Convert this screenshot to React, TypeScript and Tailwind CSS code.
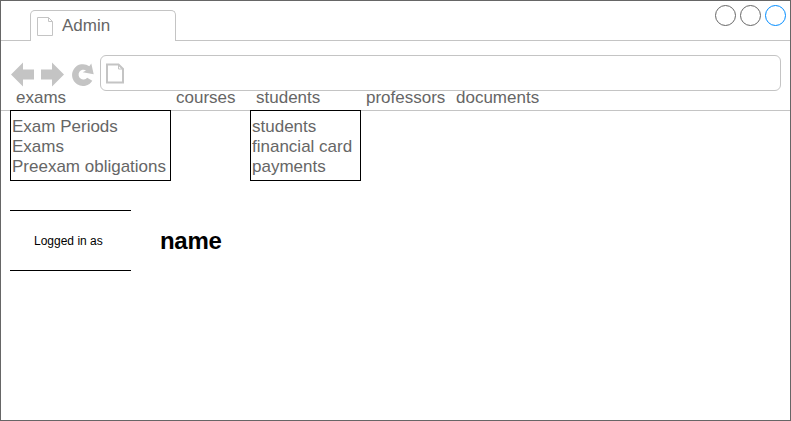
function Tab({ label }: { label: string }) {
  return (
    <div className="mt-[9px] flex w-[146px] rounded-t-[5px] border border-b-0 border-[#c4c4c4] pl-[6px] pt-[5px] text-[#666]">
      <svg width="18" height="21" viewBox="0 0 18 21" fill="none" stroke="#c4c4c4" className="mt-px">
        <path d="M.5.5H11.5L15.5 4.5V18.5H.5ZM11.5.5V4.5H15.5" />
      </svg>
      <span className="ml-[7px] leading-5">{label}</span>
    </div>
  );
}

function WindowButtons() {
  return (
    <svg width="75" height="30" viewBox="0 0 75 30" fill="none" className="ml-auto">
      <circle cx="10.5" cy="14.5" r="10" stroke="#666" />
      <circle cx="35.5" cy="14.5" r="10" stroke="#666" />
      <circle cx="60.5" cy="14.5" r="10" stroke="#008cff" />
    </svg>
  );
}

function NavigationIcons() {
  return (
    <svg width="99" height="36" viewBox="1 55 99 36" fill="#c4c4c4" className="shrink-0">
      <path d="M11 74.5 23 62.5V69.5H34V79.5H23V86.5Z" />
      <path d="M64 74.5 52 62.5V69.5H41V79.5H52V86.5Z" />
      <path d="M91.3 63.5 93.7 74.3 82.7 72.3 86 70.4A4.9 4.9 0 1 0 87.2 77.8L92.3 80.7A10.9 10.9 0 1 1 89.3 66.2Z" />
    </svg>
  );
}

function Menu({ items, width }: { items: string[]; width: string }) {
  return (
    <ul className={`-mt-px h-[71px] border border-black pl-px pt-[6px] leading-5 ${width}`}>
      {items.map((item) => (
        <li key={item} className="whitespace-nowrap">{item}</li>
      ))}
    </ul>
  );
}

export default function App() {
  return (
    <main className="flex h-[421px] w-[791px] flex-col border border-[#666] bg-white font-['Liberation_Sans',Arial,sans-serif] text-[17px] text-[#666]">
      <header className="flex h-10 shrink-0">
        <div className="w-[29px] border-b border-[#c4c4c4]" />
        <Tab label="Admin" />
        <div className="flex flex-1 border-b border-[#c4c4c4]">
          <WindowButtons />
        </div>
      </header>
      <section className="h-[70px] shrink-0 border-b border-[#c4c4c4] pt-[14px]">
        <div className="flex">
          <NavigationIcons />
          <div className="h-9 w-[681px] rounded-[6px] border border-[#c4c4c4]">
            <svg width="26" height="34" viewBox="101 56 26 34" fill="none" stroke="#c4c4c4">
              <path strokeWidth="2" d="M107 64.5H118.5L123 69V82.5H107Z" />
              <path d="M118.5 64V69H123" />
            </svg>
          </div>
        </div>
        <nav className="-mt-[3px] flex pl-[15px] leading-5">
          <span className="w-40">exams</span>
          <span className="w-20">courses</span>
          <span className="w-[110px]">students</span>
          <span className="w-[90px]">professors</span>
          <span>documents</span>
        </nav>
      </section>
      <section className="flex gap-[79px] pl-[9px]">
        <Menu width="w-[161px]" items={["Exam Periods", "Exams", "Preexam obligations"]} />
        <Menu width="w-[111px]" items={["students", "financial card", "payments"]} />
      </section>
      <section className="mt-[29px] flex items-center pl-[9px] text-black">
        <div className="h-[61px] w-[121px] border-y border-black pl-6 pt-[22px] text-xs leading-4">Logged in as</div>
        <h1 className="ml-[29px] text-2xl font-bold leading-7 tracking-[-0.3px]">name</h1>
      </section>
    </main>
  );
}
